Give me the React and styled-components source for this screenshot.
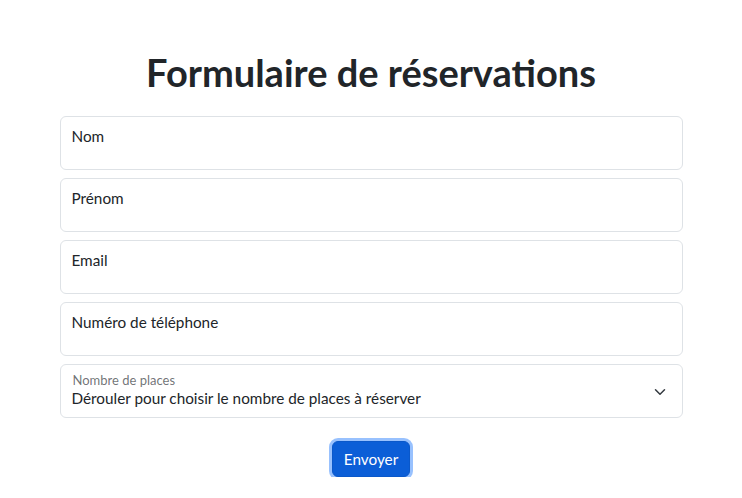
import styled, { createGlobalStyle } from "styled-components";

const GlobalStyle = createGlobalStyle`
  body {
    margin: 0;
    background: #fff;
    font-family: Lato, "Noto Sans", sans-serif;
    color: #212529;
  }
`

const Page = styled.div`
  width: 623px;
  margin: 0 auto;
  padding-top: 48px;
  display: flex;
  flex-direction: column;
`

const Title = styled.h1`
  margin: 0 0 20px;
  font-size: 38px;
  line-height: 48px;
  font-weight: 700;
  text-align: center;
  color: #212529;
`

const Fields = styled.div`
  display: flex;
  flex-direction: column;
  gap: 8px;
`

const FieldBox = styled.label`
  box-sizing: border-box;
  height: 54px;
  border: 1px solid #dee2e6;
  border-radius: 6px;
  padding: 8px 11px;
  display: flex;
  align-items: ${(p) => (p.$select ? "center" : "flex-start")};
  justify-content: space-between;
`

const FieldLabel = styled.span`
  font-size: 15.3px;
  line-height: 22px;
  color: #212529;
`

const SelectText = styled.div`
  display: flex;
  flex-direction: column;
  margin-top: -2px;
`

const SmallLabel = styled.span`
  font-size: 13px;
  line-height: 16px;
  padding-left: 1px;
  color: rgba(33, 37, 41, 0.65);
`

const SelectValue = styled.span`
  font-size: 15.3px;
  line-height: 20px;
  color: #212529;
`

const Chevron = styled.svg`
  width: 16px;
  height: 12px;
  margin-right: 3px;
  margin-top: 2px;
`

const Actions = styled.div`
  display: flex;
  justify-content: center;
  padding-top: 23px;
`

const Button = styled.button`
  font-family: inherit;
  font-size: 15.3px;
  line-height: 24px;
  color: #fff;
  background: #0b5ed7;
  border: 1px solid #0a58ca;
  border-radius: 6px;
  padding: 5px 11px;
  box-shadow: 0 0 0 3px rgba(49, 132, 253, 0.5);
`

const fields = ["Nom", "Prénom", "Email", "Numéro de téléphone"];

export default function App() {
  return (
    <>
      <GlobalStyle />
      <Page>
        <Title>Formulaire de réservations</Title>
        <Fields>
          {fields.map((f) => (
            <FieldBox key={f}>
              <FieldLabel>{f}</FieldLabel>
            </FieldBox>
          ))}
          <FieldBox $select>
            <SelectText>
              <SmallLabel>Nombre de places</SmallLabel>
              <SelectValue>Dérouler pour choisir le nombre de places à réserver</SelectValue>
            </SelectText>
            <Chevron viewBox="0 0 16 16">
              <path d="m2 5 6 6 6-6" fill="none" stroke="#343a40" strokeWidth="2" strokeLinecap="round" strokeLinejoin="round" />
            </Chevron>
          </FieldBox>
        </Fields>
        <Actions>
          <Button>Envoyer</Button>
        </Actions>
      </Page>
    </>
  );
}
